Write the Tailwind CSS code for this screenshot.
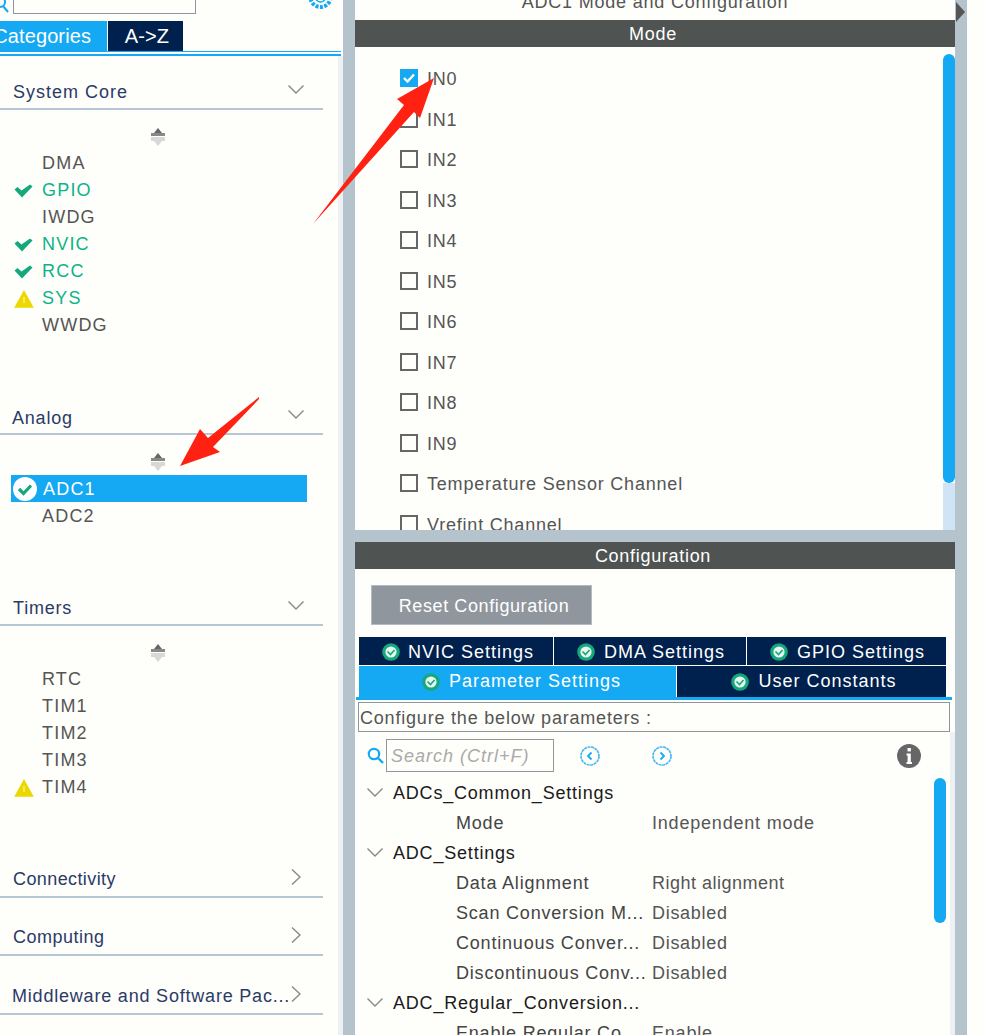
<!DOCTYPE html>
<html lang="en">
<head>
  <meta charset="UTF-8" />
  <title>ADC1 Mode and Configuration</title>
  <script src="https://cdn.jsdelivr.net/npm/@tailwindcss/browser@4"></script>
</head>
<body class="bg-[#fefefb] font-['Liberation_Sans',Arial,sans-serif] text-[18px] tracking-[0.8px] text-[#555555]">
  <!-- shared icons -->
  <svg class="hidden">
    <symbol id="check" viewBox="0 0 19 14"><path d="M0.5 5.5 L3.5 3 L7.5 6.5 L16 0.5 L18.5 2.5 L8 13.5 Z" fill="#14a87c"/></symbol>
    <symbol id="warn" viewBox="0 0 20 18"><path d="M10 0 L19.8 17.8 L0.2 17.8 Z" fill="#ecd800"/><path d="M10 7 V13" stroke="#fff6a0" stroke-width="1.2"/></symbol>
    <symbol id="updown" viewBox="0 0 14 18"><path d="M7 0 L11 5 H3 Z" fill="#666"/><rect x="0" y="5" width="14" height="3" fill="#888"/><rect x="0" y="9" width="14" height="4" fill="#d8d8d8"/><path d="M3 13 H11 L7 18 Z" fill="#d8d8d8"/></symbol>
    <symbol id="chev-down" viewBox="0 0 16 9"><path d="M0.5 0.5 L8 8 L15.5 0.5" fill="none" stroke="#888" stroke-width="1.4"/></symbol>
    <symbol id="chev-right" viewBox="0 0 10 16"><path d="M1 0.5 L9 8 L1 15.5" fill="none" stroke="#888" stroke-width="1.4"/></symbol>
    <symbol id="tab-ok" viewBox="0 0 18 18"><circle cx="9" cy="9" r="8.8" fill="#14a87c"/><circle cx="9" cy="9" r="5.6" fill="#e8f6f0"/><path d="M5.5 8.5 L8.5 11.5 L12.5 7" fill="none" stroke="#14a87c" stroke-width="1.6"/></symbol>
  </svg>

  <div class="flex h-[1035px] overflow-hidden">
    <!-- Left: categories -->
    <div class="w-[343px] shrink-0 flex flex-col">
      <div class="h-[21px] relative">
        <svg class="absolute left-0 top-0 w-[9px] h-[14px]" viewBox="0 0 9 14"><circle cx="0" cy="2" r="5" fill="none" stroke="#14a9f2" stroke-width="2"/><path d="M3 6 L8 12" stroke="#14a9f2" stroke-width="2"/></svg>
        <div class="absolute left-[13px] top-[-10px] w-[183px] h-[24px] border border-[#8f969d] bg-[#fefefb]"></div>
        <svg class="absolute left-[307px] top-0 w-[27px] h-[11px]" viewBox="0 0 27 11"><circle cx="13.5" cy="-3" r="10" fill="none" stroke="#14a9f2" stroke-width="4" stroke-dasharray="3 1.4"/><circle cx="13.5" cy="-3" r="5" fill="none" stroke="#14a9f2" stroke-width="1.5"/></svg>
      </div>
      <div class="flex h-[30px] text-[#ffffff] text-[20px] tracking-[0.1px]">
        <div class="w-[107px] bg-[#14a9f2] overflow-hidden flex items-center justify-end pr-[16px] whitespace-nowrap">Categories</div>
        <div class="w-[75px] ml-px bg-[#00214d] flex items-center justify-center pl-[3px]">A-&gt;Z</div>
      </div>
      <div class="w-[341px] h-[5px] border-t border-b-2 border-[#14a9f2]"></div>

      <div class="flex-1 flex">
        <div class="w-[338px] tracking-[1.2px]">
          <!-- System Core -->
          <div class="mt-[20px] w-[323px] h-[34px] border-b-2 border-[#b6c6d4] flex justify-between pl-[13px] pr-[19px] leading-[33px] text-[#2b3a67] tracking-[1px]">
            <span>System Core</span>
            <svg class="w-[16px] h-[9px] mt-[9px]"><use href="#chev-down"/></svg>
          </div>
          <div class="h-[40px] flex justify-center w-[316px] pt-[18px]"><svg class="w-[14px] h-[18px]"><use href="#updown"/></svg></div>
          <div class="ml-[11px] w-[296px]">
            <div class="h-[27px] flex items-center pl-[31px]">DMA</div>
            <div class="h-[27px] flex items-center text-[#0db388]"><svg class="w-[19px] h-[14px] ml-[3px] mr-[9px]"><use href="#check"/></svg>GPIO</div>
            <div class="h-[27px] flex items-center pl-[31px]">IWDG</div>
            <div class="h-[27px] flex items-center text-[#0db388]"><svg class="w-[19px] h-[14px] ml-[3px] mr-[9px]"><use href="#check"/></svg>NVIC</div>
            <div class="h-[27px] flex items-center text-[#0db388]"><svg class="w-[19px] h-[14px] ml-[3px] mr-[9px]"><use href="#check"/></svg>RCC</div>
            <div class="h-[27px] flex items-center text-[#0db388]"><svg class="w-[20px] h-[18px] ml-[3px] mr-[8px]"><use href="#warn"/></svg>SYS</div>
            <div class="h-[27px] flex items-center pl-[31px]">WWDG</div>
          </div>

          <!-- Analog -->
          <div class="mt-[62px] w-[323px] h-[34px] border-b-2 border-[#b6c6d4] flex justify-between pl-[12px] pr-[19px] leading-[35px] text-[#2b3a67] tracking-[0.8px]">
            <span>Analog</span>
            <svg class="w-[16px] h-[9px] mt-[9px]"><use href="#chev-down"/></svg>
          </div>
          <div class="h-[40px] flex justify-center w-[316px] pt-[18px]"><svg class="w-[14px] h-[18px]"><use href="#updown"/></svg></div>
          <div class="ml-[11px] w-[296px]">
            <div class="h-[27px] flex items-center bg-[#14a9f2] text-white pt-[2px]">
              <svg class="w-[24px] h-[24px] ml-[2px] mr-[6px] -mt-[2px]" viewBox="0 0 24 24"><circle cx="12" cy="12" r="12" fill="#ffffff"/><path d="M6 12 L10.5 16.5 L18 8.5" fill="none" stroke="#14a87c" stroke-width="3.2"/></svg>ADC1
            </div>
            <div class="h-[27px] flex items-center pl-[31px] pt-[2px]">ADC2</div>
          </div>

          <!-- Timers -->
          <div class="mt-[63px] w-[323px] h-[34px] border-b-2 border-[#b6c6d4] flex justify-between pl-[13px] pr-[19px] leading-[33px] text-[#2b3a67] tracking-[0.8px]">
            <span>Timers</span>
            <svg class="w-[16px] h-[9px] mt-[9px]"><use href="#chev-down"/></svg>
          </div>
          <div class="h-[40px] flex justify-center w-[316px] pt-[18px]"><svg class="w-[14px] h-[18px]"><use href="#updown"/></svg></div>
          <div class="ml-[11px] w-[296px]">
            <div class="h-[27px] flex items-center pl-[31px]">RTC</div>
            <div class="h-[27px] flex items-center pl-[31px]">TIM1</div>
            <div class="h-[27px] flex items-center pl-[31px]">TIM2</div>
            <div class="h-[27px] flex items-center pl-[31px]">TIM3</div>
            <div class="h-[27px] flex items-center"><svg class="w-[20px] h-[18px] ml-[3px] mr-[8px]"><use href="#warn"/></svg>TIM4</div>
          </div>

          <!-- Collapsed groups -->
          <div class="mt-[62px] w-[323px] h-[35px] border-b-2 border-[#b6c6d4] flex justify-between pl-[13px] pr-[22px] leading-[33px] text-[#2b3a67] tracking-[0.4px]">
            <span>Connectivity</span>
            <svg class="w-[10px] h-[16px] mt-[6px]"><use href="#chev-right"/></svg>
          </div>
          <div class="mt-[23px] w-[323px] h-[35px] border-b-2 border-[#b6c6d4] flex justify-between pl-[13px] pr-[22px] leading-[33px] text-[#2b3a67] tracking-[0.5px]">
            <span>Computing</span>
            <svg class="w-[10px] h-[16px] mt-[6px]"><use href="#chev-right"/></svg>
          </div>
          <div class="mt-[24px] w-[323px] h-[35px] border-b-2 border-[#b6c6d4] flex justify-between pl-[12px] pr-[22px] leading-[33px] text-[#2b3a67] tracking-[0.8px]">
            <span class="whitespace-nowrap">Middleware and Software Pac...</span>
            <svg class="w-[10px] h-[16px] mt-[6px] shrink-0 -ml-[4px]"><use href="#chev-right"/></svg>
          </div>
        </div>
        <div class="w-[5px] bg-[#eef1f3]"></div>
      </div>
    </div>

    <div class="w-[12px] shrink-0 bg-[#b4c3cc]"></div>

    <!-- Middle: mode and configuration -->
    <div class="w-[600px] shrink-0 flex flex-col">
      <div class="h-[530px] flex flex-col overflow-hidden">
        <div class="h-[20px] shrink-0 overflow-hidden text-center">
          <div class="leading-[20px] -mt-[8px]">ADC1 Mode and Configuration</div>
        </div>
        <div class="h-[27px] shrink-0 bg-[#4f5352] text-white text-center leading-[29px] pr-[4px]">Mode</div>
        <div class="flex flex-1 min-h-0">
          <div class="flex-1 pt-[11px] pl-[45px] overflow-hidden">
            <div class="h-[40.5px] flex items-center gap-[9px]">
              <span class="w-[18px] h-[18px] bg-[#14a9f2] flex items-center justify-center"><svg class="w-[12px] h-[10px]" viewBox="0 0 12 10"><path d="M1 5 L4.5 8.5 L11 1.5" fill="none" stroke="#ffffff" stroke-width="2.4"/></svg></span><span class="mt-[3px]">IN0</span>
            </div>
            <div class="h-[40.5px] flex items-center gap-[9px]"><span class="w-[18px] h-[18px] border-2 border-[#666666]"></span><span class="mt-[3px]">IN1</span></div>
            <div class="h-[40.5px] flex items-center gap-[9px]"><span class="w-[18px] h-[18px] border-2 border-[#666666]"></span><span class="mt-[3px]">IN2</span></div>
            <div class="h-[40.5px] flex items-center gap-[9px]"><span class="w-[18px] h-[18px] border-2 border-[#666666]"></span><span class="mt-[3px]">IN3</span></div>
            <div class="h-[40.5px] flex items-center gap-[9px]"><span class="w-[18px] h-[18px] border-2 border-[#666666]"></span><span class="mt-[3px]">IN4</span></div>
            <div class="h-[40.5px] flex items-center gap-[9px]"><span class="w-[18px] h-[18px] border-2 border-[#666666]"></span><span class="mt-[3px]">IN5</span></div>
            <div class="h-[40.5px] flex items-center gap-[9px]"><span class="w-[18px] h-[18px] border-2 border-[#666666]"></span><span class="mt-[3px]">IN6</span></div>
            <div class="h-[40.5px] flex items-center gap-[9px]"><span class="w-[18px] h-[18px] border-2 border-[#666666]"></span><span class="mt-[3px]">IN7</span></div>
            <div class="h-[40.5px] flex items-center gap-[9px]"><span class="w-[18px] h-[18px] border-2 border-[#666666]"></span><span class="mt-[3px]">IN8</span></div>
            <div class="h-[40.5px] flex items-center gap-[9px]"><span class="w-[18px] h-[18px] border-2 border-[#666666]"></span><span class="mt-[3px]">IN9</span></div>
            <div class="h-[40.5px] flex items-center gap-[9px]"><span class="w-[18px] h-[18px] border-2 border-[#666666]"></span><span class="mt-[3px]">Temperature Sensor Channel</span></div>
            <div class="h-[40.5px] flex items-center gap-[9px]"><span class="w-[18px] h-[18px] border-2 border-[#666666]"></span><span class="mt-[3px]">Vrefint Channel</span></div>
          </div>
          <div class="w-[12px] pt-[7px] flex flex-col">
            <div class="h-[429px] bg-[#14a9f2] rounded-t-[6px] rounded-b-[6px]"></div>
            <div class="flex-1 bg-[#cfe4f5]"></div>
          </div>
        </div>
      </div>

      <div class="h-[12px] shrink-0 bg-[#b4c3cc]"></div>

      <div class="h-[27px] shrink-0 bg-[#4f5352] text-white text-center leading-[29px] pr-[4px] tracking-[0.7px]">Configuration</div>
      <div class="mt-[16px] ml-[16px] w-[221px] h-[40px] shrink-0 bg-[#8f969d] border border-[#b4bcc3] text-white flex items-center justify-center pl-[5px] pt-[2px] tracking-[0.6px]">Reset Configuration</div>

      <!-- Settings tabs -->
      <div class="mt-[12px] ml-[4px] w-[587px] shrink-0 text-white tracking-[1px]">
        <div class="flex gap-px h-[28px]">
          <div class="w-[194px] bg-[#00214d] flex items-center justify-center gap-[8px] pl-[4px] pt-[2px]"><svg class="w-[18px] h-[18px]"><use href="#tab-ok"/></svg>NVIC Settings</div>
          <div class="w-[192px] bg-[#00214d] flex items-center justify-center gap-[9px] pl-[2px] pt-[2px]"><svg class="w-[18px] h-[18px]"><use href="#tab-ok"/></svg>DMA Settings</div>
          <div class="flex-1 bg-[#00214d] flex items-center justify-center gap-[9px] pl-[2px] pt-[2px]"><svg class="w-[18px] h-[18px]"><use href="#tab-ok"/></svg>GPIO Settings</div>
        </div>
        <div class="flex gap-px h-[31px] mt-px">
          <div class="w-[317px] bg-[#14a9f2] flex items-center justify-center gap-[9px] pl-[8px]"><svg class="w-[18px] h-[18px]"><use href="#tab-ok"/></svg>Parameter Settings</div>
          <div class="flex-1 bg-[#00214d] flex items-center justify-center gap-[9px] pl-[5px]"><svg class="w-[18px] h-[18px]"><use href="#tab-ok"/></svg>User Constants</div>
        </div>
      </div>
      <div class="ml-[1px] w-[596px] h-[3px] shrink-0 bg-[#14a9f2]"></div>
      <div class="mt-[2px] ml-[3px] w-[592px] h-[30px] shrink-0 border border-[#8f969d] pl-[1px] leading-[30px] whitespace-nowrap">Configure the below parameters :</div>

      <div class="flex flex-1 min-h-0">
        <div class="w-[595px] flex flex-col">
          <!-- Search row -->
          <div class="mt-[7px] h-[33px] shrink-0 flex items-center relative">
            <svg class="ml-[12px] w-[17px] h-[17px]" viewBox="0 0 17 17"><circle cx="7" cy="7" r="5.2" fill="none" stroke="#14a9f2" stroke-width="2.2"/><path d="M11 11 L16 16" stroke="#14a9f2" stroke-width="2.4"/></svg>
            <div class="ml-[2px] w-[168px] h-[33px] border border-[#8f969d] pl-[4px] leading-[33px] italic text-[#aaaaaa] whitespace-nowrap tracking-[1px]">Search (Ctrl+F)</div>
            <svg class="ml-[26px] w-[20px] h-[20px]" viewBox="0 0 20 20"><circle cx="10" cy="10" r="9" fill="none" stroke="#3fb8f4" stroke-width="1.6" stroke-dasharray="3 0.6"/><path d="M11.5 6.5 L8 10 L11.5 13.5" fill="none" stroke="#14a9f2" stroke-width="1.8"/></svg>
            <svg class="ml-[52px] w-[20px] h-[20px]" viewBox="0 0 20 20"><circle cx="10" cy="10" r="9" fill="none" stroke="#3fb8f4" stroke-width="1.6" stroke-dasharray="3 0.6"/><path d="M8.5 6.5 L12 10 L8.5 13.5" fill="none" stroke="#14a9f2" stroke-width="1.8"/></svg>
            <svg class="ml-[225px] w-[24px] h-[24px]" viewBox="0 0 24 24"><circle cx="12" cy="12" r="12" fill="#666666"/><rect x="10.5" y="4" width="3.4" height="3.4" fill="#ffffff"/><path d="M9.5 9.5 H13.8 V18 H15 V20 H9.5 V18 H10.6 V11.5 H9.5 Z" fill="#ffffff"/></svg>
          </div>
          <!-- Parameter tree -->
          <div class="flex flex-1 min-h-0 mt-[6px]">
            <div class="w-[579px] overflow-hidden">
              <div class="h-[30px] flex items-center text-[#1a1a1a] whitespace-nowrap"><svg class="ml-[12px] mr-[10px] w-[16px] h-[9px] -mt-[2px]"><use href="#chev-down"/></svg>ADCs_Common_Settings</div>
              <div class="h-[30px] flex items-center whitespace-nowrap"><span class="ml-[101px] w-[196px] text-[#444444]">Mode</span><span>Independent mode</span></div>
              <div class="h-[30px] flex items-center text-[#1a1a1a] whitespace-nowrap"><svg class="ml-[12px] mr-[10px] w-[16px] h-[9px] -mt-[2px]"><use href="#chev-down"/></svg>ADC_Settings</div>
              <div class="h-[30px] flex items-center whitespace-nowrap"><span class="ml-[101px] w-[196px] text-[#444444]">Data Alignment</span><span class="tracking-[0.5px]">Right alignment</span></div>
              <div class="h-[30px] flex items-center whitespace-nowrap"><span class="ml-[101px] w-[196px] text-[#444444]">Scan Conversion M...</span><span class="tracking-[0.7px]">Disabled</span></div>
              <div class="h-[30px] flex items-center whitespace-nowrap"><span class="ml-[101px] w-[196px] text-[#444444]">Continuous Conver...</span><span class="tracking-[0.7px]">Disabled</span></div>
              <div class="h-[30px] flex items-center whitespace-nowrap"><span class="ml-[101px] w-[196px] text-[#444444]">Discontinuous Conv...</span><span class="tracking-[0.7px]">Disabled</span></div>
              <div class="h-[30px] flex items-center text-[#1a1a1a] whitespace-nowrap"><svg class="ml-[12px] mr-[10px] w-[16px] h-[9px] -mt-[2px]"><use href="#chev-down"/></svg>ADC_Regular_Conversion...</div>
              <div class="h-[30px] flex items-center whitespace-nowrap"><span class="ml-[101px] w-[196px] text-[#444444]">Enable Regular Co...</span><span>Enable</span></div>
            </div>
            <div class="w-[12px]">
              <div class="h-[145px] bg-[#14a9f2] rounded-[6px]"></div>
            </div>
          </div>
        </div>
        <div class="w-[5px] bg-[#eef1f3]"></div>
      </div>
    </div>

    <div class="w-[12px] shrink-0 bg-[#b4c3cc] relative">
      <svg class="absolute left-[1px] top-[2px] w-[9px] h-[20px]" viewBox="0 0 9 20"><path d="M0 0 L9 10 L0 20 Z" fill="#555555"/></svg>
    </div>
  </div>

  <!-- red annotation arrows -->
  <svg class="absolute left-0 top-0 w-[984px] h-[1035px] pointer-events-none" viewBox="0 0 984 1035">
    <path d="M434 78 L397 99 L404 105 L313 224 L414 112 L420 118 Z" fill="#ff2212"/>
    <path d="M259 397 L208 438 L200 429 L180 466 L220 452 L213 447 L259 399 Z" fill="#ff2212"/>
  </svg>
</body>
</html>
